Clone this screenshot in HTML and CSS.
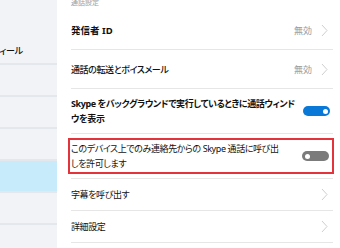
FILE: index.html
```html
<!DOCTYPE html>
<html lang="ja">
<head>
<meta charset="utf-8">
<link rel="stylesheet" href="styles.css">
</head>
<body>
<div class="app">
  <nav class="sidebar">
    <div class="side-top"></div>
    <div class="side-item"><span class="side-label">プロフィール</span></div>
    <div class="side-item"></div>
    <div class="side-item"></div>
    <div class="side-item"></div>
    <div class="side-item active"></div>
    <div class="side-item"></div>
    <div class="side-item"></div>
  </nav>
  <main class="content">
    <div class="section-title">通話設定</div>
    <div class="row h39">
      <span class="label bold wide">発信者 ID</span>
      <span class="value">無効</span>
      <svg class="chev" viewBox="0 0 7 13"><polyline points="1,1 6,6.5 1,12"/></svg>
    </div>
    <div class="row h39">
      <span class="label medium">通話の転送とボイスメール</span>
      <span class="value">無効</span>
      <svg class="chev" viewBox="0 0 7 13"><polyline points="1,1 6,6.5 1,12"/></svg>
    </div>
    <div class="row h45">
      <span class="label bold">Skype をバックグラウンドで実行しているときに通話ウィンド<br>ウを表示</span>
      <span class="toggle on"><span class="knob"></span></span>
    </div>
    <div class="row h45">
      <div class="annot">
        <span class="label">このデバイス上でのみ連絡先からの Skype 通話に呼び出<br>しを許可します</span>
        <span class="toggle off"><span class="knob"></span></span>
      </div>
    </div>
    <div class="row h32">
      <span class="label">字幕を呼び出す</span>
      <svg class="chev" viewBox="0 0 7 13"><polyline points="1,1 6,6.5 1,12"/></svg>
    </div>
    <div class="row h32">
      <span class="label">詳細設定</span>
      <svg class="chev" viewBox="0 0 7 13"><polyline points="1,1 6,6.5 1,12"/></svg>
    </div>
  </main>
</div>
</body>
</html>
```
FILE: styles.css
```css
html, body {
  margin: 0;
  padding: 0;
  width: 340px;
  height: 248px;
  overflow: hidden;
  background: #ffffff;
}
body {
  font-family: "Noto Sans", "Noto Sans CJK JP", sans-serif;
  font-feature-settings: "palt" 1;
  color: #111111;
}
.app {
  display: flex;
  width: 340px;
  height: 248px;
}
.sidebar {
  width: 57px;
  flex: none;
  background: #f1f3f7;
  display: flex;
  flex-direction: column;
  overflow: hidden;
}
.side-top {
  height: 33px;
  flex: none;
}
.side-item {
  height: 32px;
  flex: none;
  box-sizing: border-box;
  border-bottom: 2px solid #e4e7ec;
  display: flex;
  align-items: center;
  padding-top: 4px;
}
.side-item.active {
  background: #c7ebfb;
}
.side-label {
  margin-left: -24px;
  font-size: 9px;
  font-weight: 500;
  letter-spacing: -0.3px;
  white-space: nowrap;
  color: #111111;
}
.content {
  flex: 1;
  min-width: 0;
  padding: 0 7px 0 14px;
  display: flex;
  flex-direction: column;
}
.section-title {
  height: 11px;
  font-size: 7px;
  line-height: 8px;
  margin-top: -1px;
  margin-bottom: 1px;
  color: #a0a0a0;
}
.row {
  display: flex;
  align-items: center;
  box-sizing: border-box;
  border-bottom: 1px solid #e6e6e6;
  flex: none;
}
.h39 { height: 39px; }
.h45 { height: 45px; }
.h32 { height: 32px; }
.label {
  flex: 1;
  min-width: 0;
  font-size: 9px;
  line-height: 15px;
  letter-spacing: -0.4px;
  font-weight: 400;
  white-space: nowrap;
}
.label.wide {
  font-size: 9.5px;
  letter-spacing: 0;
}
.label.bold { font-weight: 700; }
.label.medium { font-weight: 500; }
.value {
  font-size: 9px;
  color: #9b9b9b;
  margin-right: 9px;
}
.chev {
  width: 7px;
  height: 13px;
  margin-right: 5px;
  fill: none;
  stroke: #cfcfcf;
  stroke-width: 1;
  flex: none;
}
.toggle {
  width: 27px;
  height: 10px;
  border-radius: 5px;
  display: flex;
  align-items: center;
  box-sizing: border-box;
  padding: 0 2.5px;
  margin-right: 3px;
  flex: none;
}
.toggle.on {
  background: #0a78d6;
  justify-content: flex-end;
}
.toggle.off {
  background: #7b7b7b;
  justify-content: flex-start;
}
.knob {
  width: 5px;
  height: 5px;
  border-radius: 50%;
  background: #ffffff;
}
.annot {
  flex: 1;
  min-width: 0;
  display: flex;
  align-items: center;
  align-self: stretch;
  margin: 4px -1px 4px -3px;
  padding: 0 0 0 1px;
  border: 2px solid #e3343c;
  box-sizing: border-box;
}
```
